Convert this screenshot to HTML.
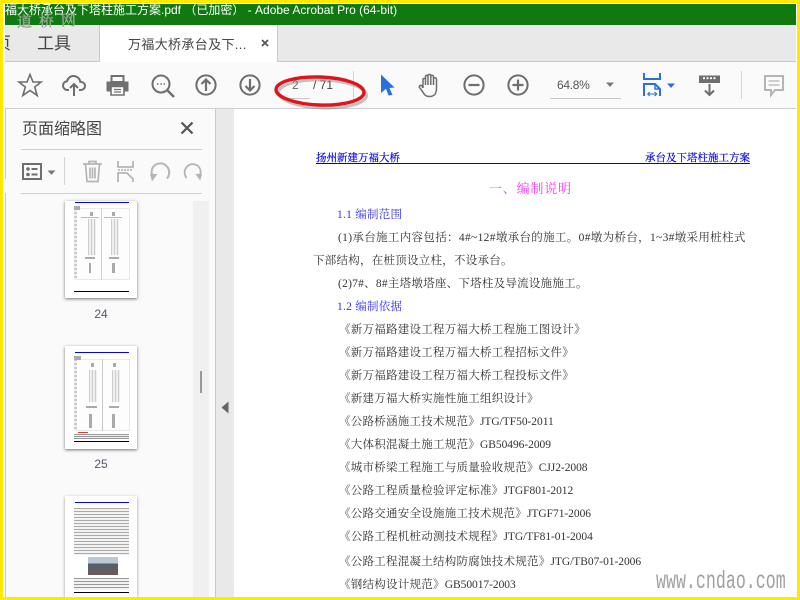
<!DOCTYPE html>
<html><head><meta charset="utf-8">
<style>
html,body{margin:0;padding:0;width:800px;height:600px;overflow:hidden;background:#fff}
body{position:relative;font-family:"Liberation Sans","Noto Sans CJK SC",sans-serif}
.a{position:absolute}
.t{position:absolute;white-space:nowrap;line-height:16px;height:16px;font-family:"Liberation Serif","Noto Serif CJK SC",serif;font-size:11.5px;color:#333;letter-spacing:.25px}
.t span{letter-spacing:-.05px}
svg{position:absolute;overflow:visible}
.dr{position:absolute;background:#fdfdfd;border:1px solid #e8e8e8;box-sizing:border-box}
.col{position:absolute;background:repeating-linear-gradient(90deg,#ccc 0 1px,#efefef 1px 3px)}
.st{position:absolute;background:repeating-linear-gradient(#ccc 0 2px,#f0f0f0 2px 4px)}
.tick{position:absolute;background:#aaa}
</style></head><body>
<div class="a" style="left:5px;top:4px;width:791px;height:21px;background:#107a10"></div>
<div class="a" style="left:5px;top:0;white-space:nowrap;font-size:12px;line-height:20px;color:#fff">福大桥承台及下塔柱施工方案.pdf （已加密） - Adobe Acrobat Pro (64-bit)</div>
<div class="a" style="left:5px;top:25px;width:791px;height:36px;background:#e9e9e9"></div>
<div class="a" style="left:5px;top:61px;width:791px;height:1px;background:#c9c9c9"></div>
<div class="a" style="left:99px;top:25px;width:179px;height:37px;background:#fff;border-left:1px solid #c9c9c9;border-right:1px solid #c9c9c9;box-sizing:border-box"></div>
<div class="a" style="left:-6px;top:34px;white-space:nowrap;font-size:17px;line-height:20px;color:#444;clip-path:inset(0 0 0 11px)">页</div>
<div class="a" style="left:37px;top:34px;white-space:nowrap;font-size:17px;line-height:20px;color:#444">工具</div>
<div class="a" style="left:128px;top:36px;white-space:nowrap;font-size:13px;line-height:18px;color:#444;letter-spacing:.35px">万福大桥承台及下...</div>
<svg style="left:260px;top:38px" width="10" height="10" viewBox="0 0 10 10"><path d="M2 2L8 8M8 2L2 8" stroke="#555" stroke-width="1.800"/></svg>
<div class="a" style="left:5px;top:62px;width:791px;height:46px;background:#fafafa"></div>
<div class="a" style="left:5px;top:108px;width:791px;height:1px;background:#cfcfcf"></div>

<svg style="left:18px;top:73px" width="24" height="24" viewBox="0 0 24 24"><path d="M12 1.500L15 9H23L16.700 14L19.200 22.500L12 17.500L4.800 22.500L7.300 14L1 9H9Z" fill="none" stroke="#6e6e6e" stroke-width="1.600"/></svg>
<svg style="left:62px;top:73px" width="24" height="24" viewBox="0 0 24 24"><path d="M7 17H5.500C3 17 1 15 1 12.500 1 10.200 2.800 8.400 5 8.200 5.800 5 8.500 3 11.500 3 15 3 17.800 5.500 18.300 8.800 20.800 9 23 10.500 23 13 23 15.200 21.200 17 19 17H17" fill="none" stroke="#6e6e6e" stroke-width="2"/><path d="M12 23V11M8 15L12 11L16 15" fill="none" stroke="#6e6e6e" stroke-width="2"/></svg>
<svg style="left:106px;top:74px" width="23" height="22" viewBox="0 0 23 22"><path d="M5 8V1.500H18V8M1 8H22V17H18V13H5V17H1Z" fill="#707070" stroke="#707070" stroke-width="1" stroke-linejoin="round"/><path d="M5 12.500H18V21H5Z" fill="#fff" stroke="#707070" stroke-width="1.600"/><path d="M6.500 3H16.500V7H6.500Z" fill="#fafafa"/><path d="M8 15.500H15M8 18H15" stroke="#707070" stroke-width="1.200"/></svg>
<svg style="left:151px;top:74px" width="24" height="24" viewBox="0 0 24 24"><circle cx="10" cy="10" r="8.500" fill="none" stroke="#6e6e6e" stroke-width="2"/><path d="M16 16L23 23" stroke="#6e6e6e" stroke-width="2.400"/><path d="M6 10H7.500M9.300 10H10.800M12.600 10H14" stroke="#6e6e6e" stroke-width="1.500"/></svg>
<svg style="left:195px;top:74px" width="22" height="22" viewBox="0 0 22 22"><circle cx="11" cy="11" r="9.600" fill="none" stroke="#6e6e6e" stroke-width="2"/><path d="M11 17V5.500M6.500 10L11 5.500L15.500 10" fill="none" stroke="#6e6e6e" stroke-width="2.200"/></svg>
<svg style="left:239px;top:74px" width="22" height="22" viewBox="0 0 22 22"><circle cx="11" cy="11" r="9.600" fill="none" stroke="#6e6e6e" stroke-width="2"/><path d="M11 5V16.500M6.500 12L11 16.500L15.500 12" fill="none" stroke="#6e6e6e" stroke-width="2.200"/></svg>

<div class="a" style="left:292px;top:77px;font-size:12px;line-height:16px;color:#666;white-space:nowrap">2</div>
<div class="a" style="left:313px;top:77px;font-size:12px;line-height:16px;color:#444;white-space:nowrap">/ 71</div>
<div class="a" style="left:288px;top:98px;width:22px;height:1px;background:#c8c8c8"></div>
<div class="a" style="left:353px;top:71px;width:1px;height:29px;background:#d5d5d5"></div>
<svg style="left:270px;top:70px" width="108" height="42" viewBox="0 0 108 42"><ellipse cx="50" cy="21" rx="44" ry="14" fill="none" stroke="#888" stroke-width="3" opacity=".5" transform="translate(2.500 3) rotate(2 50 21)"/><ellipse cx="50" cy="21" rx="44" ry="14" fill="none" stroke="#e0141a" stroke-width="3.400" transform="rotate(2 50 21)"/></svg>

<svg style="left:380px;top:74px" width="16" height="22" viewBox="0 0 16 22"><path d="M1 0.500L14.500 13.500L9.500 14L12.500 21L8.500 21.500L6 14.800L1 19Z" fill="#2a70d8"/></svg>
<svg style="left:418px;top:73px" width="24" height="25" viewBox="0 0 24 25"><path d="M5 15V6.500C5 5 7.500 5 7.500 6.500V12M7.500 12V3.500C7.500 2 10 2 10 3.500V12M10 12V2.500C10 1 12.800 1 12.800 2.500V12M12.800 12V3.500C12.800 2 15.500 2 15.500 3.500V12M15.500 12V6C15.500 4.500 18.500 4.500 18.500 6V15C18.500 20 17 23.500 11.500 23.500 7 23.500 6 21 4.500 18.500L1.500 14.500C.5 12.800 3 11.500 4 13L5 15" fill="none" stroke="#6e6e6e" stroke-width="1.500"/></svg>
<svg style="left:463px;top:74px" width="22" height="22" viewBox="0 0 22 22"><circle cx="11" cy="11" r="9.600" fill="none" stroke="#6e6e6e" stroke-width="2"/><path d="M5.500 11H16.500" stroke="#6e6e6e" stroke-width="2.200"/></svg>
<svg style="left:507px;top:74px" width="22" height="22" viewBox="0 0 22 22"><circle cx="11" cy="11" r="9.600" fill="none" stroke="#6e6e6e" stroke-width="2"/><path d="M5.500 11H16.500M11 5.500V16.500" stroke="#6e6e6e" stroke-width="2.200"/></svg>
<div class="a" style="left:557px;top:77px;font-size:12px;line-height:16px;color:#555;white-space:nowrap;letter-spacing:-.3px">64.8%</div>
<svg style="left:605px;top:82px" width="10" height="6" viewBox="0 0 10 6"><path d="M1 0.500H9L5 5Z" fill="#777"/></svg>
<div class="a" style="left:550px;top:98px;width:71px;height:1px;background:#c8c8c8"></div>
<svg style="left:643px;top:72px" width="26" height="26" viewBox="0 0 26 26"><path d="M1 1V7H17V1" fill="none" stroke="#2a70d8" stroke-width="2"/><path d="M1 24V12H12L17 17V24" fill="none" stroke="#2a70d8" stroke-width="2"/><path d="M12 12V17H17" fill="none" stroke="#2a70d8" stroke-width="1.400"/><path d="M4.500 22H14M4.500 22L7 20M4.500 22L7 24M14 22L11.500 20M14 22L11.500 24" fill="none" stroke="#2a70d8" stroke-width="1.100"/></svg>
<svg style="left:666px;top:83px" width="10" height="6" viewBox="0 0 10 6"><path d="M1 0.500H9L5 5Z" fill="#2a70d8"/></svg>
<svg style="left:698px;top:74px" width="23" height="23" viewBox="0 0 23 23"><path d="M1 1.500H22V9H1Z" fill="#6e6e6e"/><path d="M5 4.200H7M8.500 4.200H10.500M12 4.200H14M15.500 4.200H17.500" stroke="#fff" stroke-width="1.800"/><path d="M11.500 10V21M7 16.500L11.500 21L16 16.500" fill="none" stroke="#6e6e6e" stroke-width="2"/></svg>
<div class="a" style="left:741px;top:71px;width:1px;height:28px;background:#d5d5d5"></div>
<svg style="left:764px;top:75px" width="20" height="22" viewBox="0 0 20 22"><path d="M1 1H19V15H11L7 20V15H1Z" fill="none" stroke="#b5b5b5" stroke-width="2"/><path d="M4.500 6H15.500M4.500 10H15.500" stroke="#b5b5b5" stroke-width="1.200"/></svg>

<!-- sidebar -->
<div class="a" style="left:5px;top:109px;width:210px;height:488px;background:#fafafa"></div>
<div class="a" style="left:5px;top:109px;width:1px;height:70px;background:#ccc"></div>
<div class="a" style="left:5px;top:193px;width:1px;height:404px;background:#ccc"></div>
<div class="a" style="left:215px;top:109px;width:1px;height:488px;background:#c9c9c9"></div>
<div class="a" style="left:216px;top:109px;width:18px;height:488px;background:#e9e9e9"></div>
<div class="a" style="left:22px;top:119px;font-size:16px;line-height:22px;color:#444;white-space:nowrap">页面缩略图</div>
<svg style="left:180px;top:121px" width="14" height="14" viewBox="0 0 14 14"><path d="M1.500 1.500L12.500 12.500M12.500 1.500L1.500 12.500" stroke="#555" stroke-width="2.200"/></svg>
<div class="a" style="left:21px;top:149px;width:181px;height:1px;background:#cfcfcf"></div>
<svg style="left:22px;top:163px" width="20" height="18" viewBox="0 0 20 18"><path d="M1 1H19V16H1Z" fill="none" stroke="#6e6e6e" stroke-width="2"/><circle cx="6" cy="6" r="1.800" fill="#6e6e6e"/><circle cx="6" cy="11.500" r="1.800" fill="#6e6e6e"/><path d="M9.500 6H15.500M9.500 11.500H15.500" stroke="#6e6e6e" stroke-width="2"/></svg>
<svg style="left:47px;top:170px" width="9" height="5" viewBox="0 0 9 5"><path d="M.5 .5H8.500L4.500 4.800Z" fill="#777"/></svg>
<div class="a" style="left:64px;top:157px;width:1px;height:28px;background:#d5d5d5"></div>
<svg style="left:82px;top:160px" width="21" height="23" viewBox="0 0 21 23"><path d="M1 4H20M7 4V1.500H14V4M3.500 4L5 21.500H16L17.500 4M8 7.500V18.500M10.500 7.500V18.500M13 7.500V18.500" fill="none" stroke="#b5b5b5" stroke-width="1.700"/></svg>
<svg style="left:117px;top:160px" width="18" height="23" viewBox="0 0 18 23"><path d="M1 1V7H16V1" fill="none" stroke="#b5b5b5" stroke-width="1.800"/><path d="M1 10H16" stroke="#b5b5b5" stroke-width="1.800" stroke-dasharray="2 1"/><path d="M1 22V13H10L16 19V22" fill="none" stroke="#b5b5b5" stroke-width="1.800"/></svg>
<svg style="left:149px;top:161px" width="22" height="22" viewBox="0 0 22 22"><path d="M5 17C2 14 1.800 9 4.500 5.500 8 1.500 14 1.500 17.500 5 21 8.500 21 14 18 17.500" fill="none" stroke="#b5b5b5" stroke-width="2"/><path d="M1 13H8.500L3 20.500Z" fill="#b5b5b5"/></svg>
<svg style="left:183px;top:161px" width="20" height="22" viewBox="0 0 22 22"><path d="M17 17C20 14 20.200 9 17.500 5.500 14 1.500 8 1.500 4.500 5 1 8.500 1 14 4 17.500" fill="none" stroke="#b5b5b5" stroke-width="2"/><path d="M21 13H13.500L19 20.500Z" fill="#b5b5b5"/></svg>
<div class="a" style="left:21px;top:193px;width:181px;height:1px;background:#cfcfcf"></div>
<div class="a" style="left:193px;top:201px;width:16px;height:396px;background:#f0f0f0"></div>
<div class="a" style="left:200px;top:371px;width:2px;height:22px;background:#999"></div>
<svg style="left:221px;top:401px" width="8" height="13" viewBox="0 0 8 13"><path d="M7.500 0.500V12.500L.5 6.500Z" fill="#666"/></svg>

<!-- thumb 24 -->
<div class="a" style="left:65px;top:201px;width:72px;height:97px;background:#fff;box-shadow:0 1px 3px rgba(0,0,0,.55);overflow:hidden">
<div class="a" style="left:10px;top:1px;width:54px;height:1px;background:#00f"></div>
<div class="dr" style="left:9px;top:7px;width:56px;height:72px"></div>
<div class="st" style="left:9px;top:7px;width:3px;height:72px"></div>
<div class="a" style="left:9px;top:5px;width:6px;height:4px;background:#aaa"></div>
<div class="a" style="left:36px;top:7px;width:1px;height:72px;background:#d0d0d0"></div>
<div class="col" style="left:23px;top:18px;width:8px;height:36px"></div>
<div class="col" style="left:46px;top:18px;width:8px;height:36px"></div>
<div class="a" style="left:16px;top:16px;width:18px;height:1px;background:#bbb"></div>
<div class="a" style="left:39px;top:16px;width:18px;height:1px;background:#bbb"></div>
<div class="tick" style="left:25px;top:11px;width:3px;height:4px"></div>
<div class="tick" style="left:47px;top:11px;width:3px;height:4px"></div>
<div class="tick" style="left:20px;top:56px;width:10px;height:2px"></div>
<div class="tick" style="left:44px;top:56px;width:10px;height:2px"></div>
<div class="tick" style="left:24px;top:62px;width:2px;height:10px"></div>
<div class="tick" style="left:47px;top:62px;width:3px;height:10px"></div>
<div class="a" style="left:9px;top:90px;width:55px;height:1px;background:#000"></div>
</div>
<div class="a" style="left:65px;top:306px;width:72px;text-align:center;font-size:12px;line-height:16px;color:#556">24</div>
<!-- thumb 25 -->
<div class="a" style="left:65px;top:346px;width:72px;height:103px;background:#fff;box-shadow:0 1px 3px rgba(0,0,0,.55);overflow:hidden">
<div class="a" style="left:10px;top:6px;width:54px;height:1px;background:#00f"></div>
<div class="dr" style="left:9px;top:13px;width:56px;height:72px"></div>
<div class="st" style="left:9px;top:13px;width:3px;height:72px"></div>
<div class="a" style="left:9px;top:10px;width:7px;height:4px;background:#aaa"></div>
<div class="a" style="left:37px;top:13px;width:1px;height:72px;background:#c8c8c8"></div>
<div class="col" style="left:24px;top:24px;width:8px;height:32px"></div>
<div class="col" style="left:47px;top:24px;width:8px;height:32px"></div>
<div class="tick" style="left:26px;top:17px;width:3px;height:4px"></div>
<div class="tick" style="left:48px;top:17px;width:3px;height:4px"></div>
<div class="tick" style="left:21px;top:60px;width:11px;height:2px"></div>
<div class="tick" style="left:44px;top:60px;width:10px;height:2px"></div>
<div class="tick" style="left:24px;top:68px;width:3px;height:14px"></div>
<div class="tick" style="left:47px;top:68px;width:3px;height:14px"></div>
<div class="a" style="left:13px;top:86px;width:10px;height:1px;background:#e33"></div>
<div class="a" style="left:9px;top:88px;width:55px;height:5px;background:repeating-linear-gradient(#999 0 1px,#f0f0f0 1px 2px)"></div>
<div class="a" style="left:9px;top:95px;width:55px;height:1px;background:#000"></div>
</div>
<div class="a" style="left:65px;top:456px;width:72px;text-align:center;font-size:12px;line-height:16px;color:#556">25</div>
<!-- thumb 26 -->
<div class="a" style="left:65px;top:496px;width:72px;height:101px;background:#fff;box-shadow:0 1px 3px rgba(0,0,0,.4);overflow:hidden">
<div class="a" style="left:10px;top:6px;width:54px;height:1px;background:#00f"></div>
<div class="a" style="left:9px;top:12px;width:55px;height:47px;background:repeating-linear-gradient(#aaa 0 1px,#f2f2f2 1px 3px)"></div>
<div class="a" style="left:23px;top:61px;width:30px;height:18px;background:linear-gradient(#b8c8d4 0 35%,#56606a 35% 70%,#6c5a5a 70%)"></div>
<div class="a" style="left:9px;top:82px;width:55px;height:12px;background:repeating-linear-gradient(#999 0 1px,#f2f2f2 1px 3px)"></div>
<div class="a" style="left:9px;top:96px;width:55px;height:1px;background:#000"></div>
</div>

<!-- document -->
<div class="t" style="left:316px;top:151px;color:#0000e0;font-size:10.500px;letter-spacing:0;-webkit-text-stroke:.2px #0000e0">扬州新建万福大桥</div>
<div class="t" style="left:645px;top:151px;color:#0000e0;font-size:10.500px;letter-spacing:0;-webkit-text-stroke:.2px #0000e0">承台及下塔柱施工方案</div>
<div class="a" style="left:316px;top:163px;width:434px;height:1px;background:#0000e0"></div>
<div class="t" style="left:489px;top:181px;color:#ff33ff;font-size:13px;letter-spacing:.8px">一、编制说明</div>
<div class="t" style="left:337px;top:207px;color:#3030f0">1.1 编制范围</div>
<div class="t" style="left:338px;top:230px;letter-spacing:.33px">(1)承台施工内容包括：4#~12#墩承台的施工。0#墩为桥台，1~3#墩采用桩柱式</div>
<div class="t" style="left:313px;top:253px">下部结构，在桩顶设立柱，不设承台。</div>
<div class="t" style="left:338px;top:276px">(2)7#、8#主塔墩塔座、下塔柱及导流设施施工。</div>
<div class="t" style="left:337px;top:299px;color:#3030f0">1.2 编制依据</div>
<div class="t" style="left:339px;top:322px">《新万福路建设工程万福大桥工程施工图设计》</div>
<div class="t" style="left:339px;top:345px">《新万福路建设工程万福大桥工程招标文件》</div>
<div class="t" style="left:339px;top:368px">《新万福路建设工程万福大桥工程投标文件》</div>
<div class="t" style="left:339px;top:391px">《新建万福大桥实施性施工组织设计》</div>
<div class="t" style="left:339px;top:414px">《公路桥涵施工技术规范》<span>JTG/TF50-2011</span></div>
<div class="t" style="left:339px;top:437px">《大体积混凝土施工规范》<span>GB50496-2009</span></div>
<div class="t" style="left:339px;top:460px">《城市桥梁工程施工与质量验收规范》<span>CJJ2-2008</span></div>
<div class="t" style="left:339px;top:483px">《公路工程质量检验评定标准》<span>JTGF801-2012</span></div>
<div class="t" style="left:339px;top:506px">《公路交通安全设施施工技术规范》<span>JTGF71-2006</span></div>
<div class="t" style="left:339px;top:529px">《公路工程机桩动测技术规程》<span>JTG/TF81-01-2004</span></div>
<div class="t" style="left:339px;top:554px">《公路工程混凝土结构防腐蚀技术规范》<span>JTG/TB07-01-2006</span></div>
<div class="t" style="left:339px;top:577px">《钢结构设计规范》<span>GB50017-2003</span></div>

<!-- watermarks -->
<div class="a" style="left:17px;top:12px;white-space:nowrap;font-family:'Liberation Serif','Noto Serif CJK SC',serif;font-size:15px;line-height:20px;color:#98a898;letter-spacing:7px;transform:rotate(-2deg);-webkit-text-stroke:.4px #98a898">道桥网</div>
<div class="a" style="left:656px;top:569px;white-space:nowrap;font-family:'Liberation Mono',monospace;font-size:25px;line-height:26px;color:#a0a0a0;transform:scaleX(.665);transform-origin:left">www.cndao.com</div>

<!-- yellow frame -->
<div class="a" style="left:0;top:0;width:800px;height:3px;background:#ffe900"></div>
<div class="a" style="left:0;top:0;width:3px;height:600px;background:#ffe900"></div>
<div class="a" style="left:797px;top:0;width:3px;height:600px;background:#ffe900"></div>
<div class="a" style="left:0;top:597px;width:800px;height:3px;background:#ffe900"></div>
</body></html>
